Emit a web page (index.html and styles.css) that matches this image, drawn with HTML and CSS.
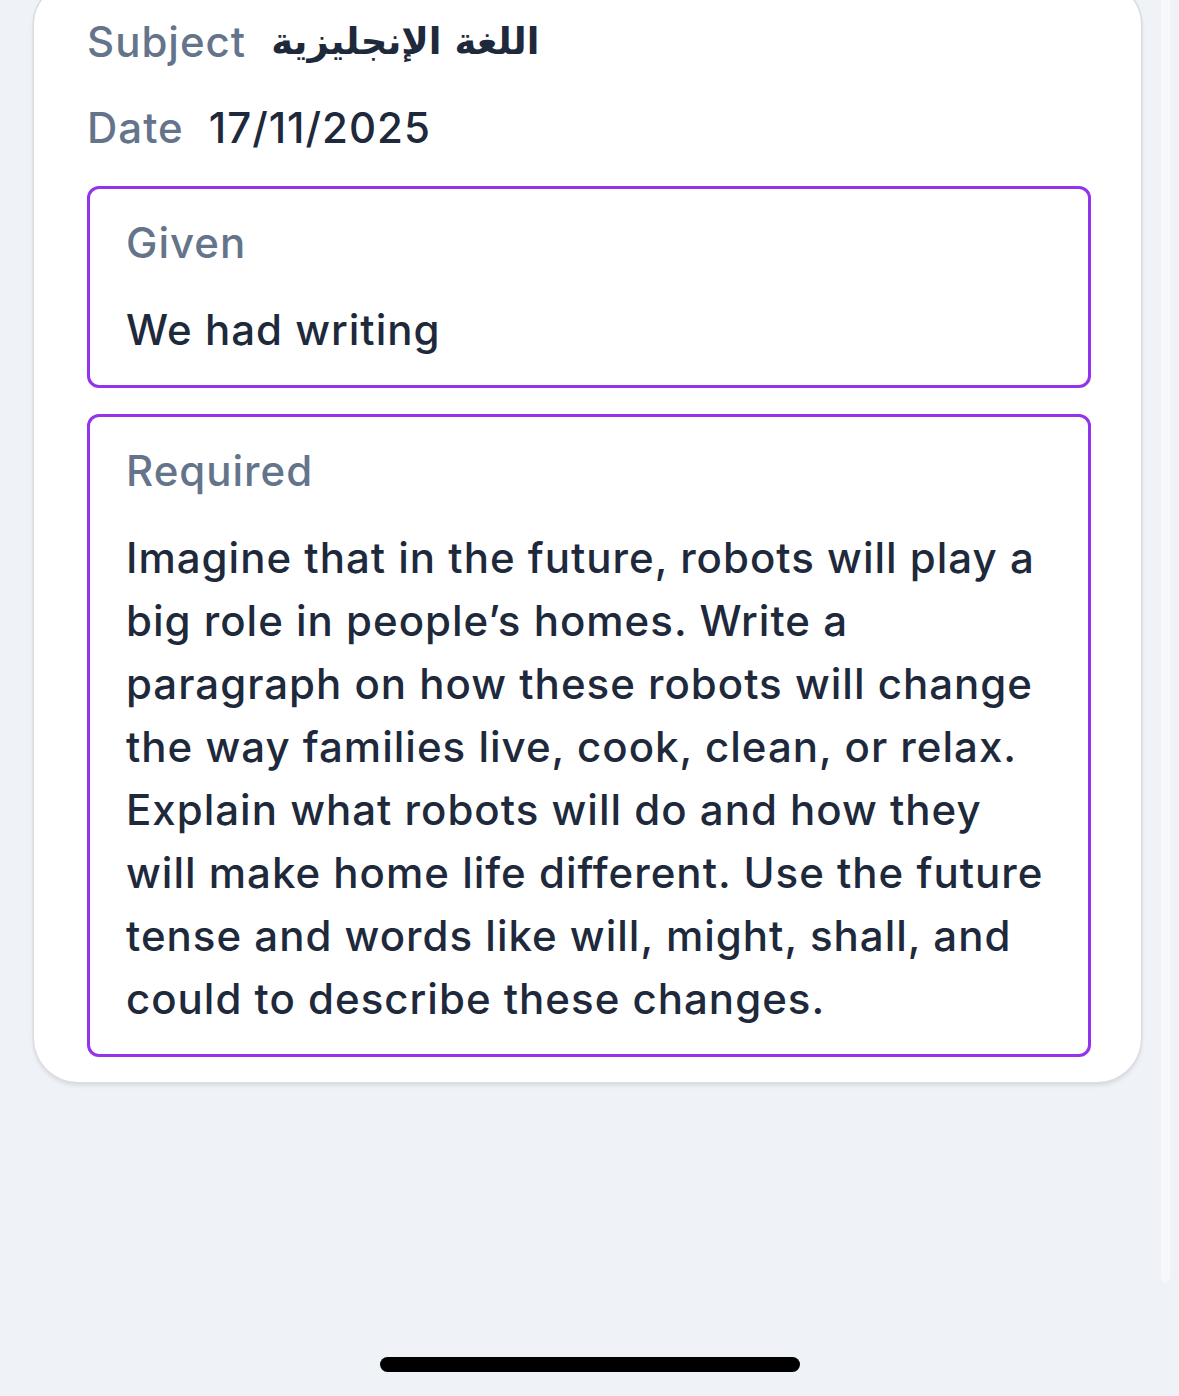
FILE: index.html
```html
<!DOCTYPE html>
<html lang="en">
<head>
<meta charset="utf-8">
<title>Homework detail</title>
<link rel="stylesheet" href="styles.css">
</head>
<body>
<div class="screen">
  <main class="page">
    <section class="card">
      <div class="meta-row">
        <span class="meta-label">Subject</span>
        <span class="meta-value arabic" dir="rtl" lang="ar">اللغة الإنجليزية</span>
      </div>
      <div class="meta-row">
        <span class="meta-label">Date</span>
        <span class="meta-value">17/11/2025</span>
      </div>
      <div class="field">
        <div class="field-label">Given</div>
        <div class="field-text">We had writing</div>
      </div>
      <div class="field">
        <div class="field-label">Required</div>
        <div class="field-text">Imagine that in the future, robots will play a big role in people’s homes. Write a paragraph on how these robots will change the way families live, cook, clean, or relax. Explain what robots will do and how they will make home life different. Use the future tense and words like will, might, shall, and could to describe these changes.</div>
      </div>
    </section>
  </main>
  <div class="scroll-track"></div>
  <div class="home-indicator"></div>
</div>
</body>
</html>
```

FILE: styles.css
```css
html, body {
  margin: 0;
  padding: 0;
}

body {
  background: #eff2f7;
  font-family: "Inter", "Noto Sans", sans-serif;
  font-weight: 500;
  letter-spacing: 1px;
  overflow: hidden;
}

.screen {
  position: relative;
  width: 1179px;
  height: 1396px;
  overflow: hidden;
  background: #eff2f7;
}

.page {
  padding-left: 34px;
}

.card {
  width: 1107px;
  box-sizing: border-box;
  margin-top: -16px;
  padding: 26px 50px 25px 53px;
  background: #ffffff;
  border-radius: 40px 40px 44px 44px;
  box-shadow: 0 0 0 1.5px #dcdde1, 0 3px 5px rgba(0, 0, 0, 0.12);
}

.meta-row {
  display: flex;
  align-items: center;
  gap: 25px;
  height: 63px;
  line-height: 63px;
  font-size: 42px;
  margin-bottom: 23px;
}

.meta-row + .meta-row {
  margin-bottom: 27px;
}

.meta-label {
  color: #64748b;
}

.meta-value {
  color: #1e293b;
}

.arabic {
  font-family: "DejaVu Sans", sans-serif;
  font-weight: 700;
  font-size: 37px;
  letter-spacing: 0;
}

.field {
  border: 3px solid #9333ea;
  border-radius: 12px;
  padding: 22px 36px 24px 36px;
  font-size: 42px;
  line-height: 63px;
}

.field + .field {
  margin-top: 26px;
}

.field-label {
  color: #64748b;
  margin-bottom: 24px;
}

.field-text {
  color: #1e293b;
}

.scroll-track {
  position: absolute;
  left: 1161px;
  top: 0;
  width: 9px;
  height: 1283px;
  background: #f6f8fb;
  border-radius: 0 0 5px 5px;
}

.home-indicator {
  position: absolute;
  left: 380px;
  top: 1357px;
  width: 420px;
  height: 15px;
  border-radius: 8px;
  background: #000000;
}
```
